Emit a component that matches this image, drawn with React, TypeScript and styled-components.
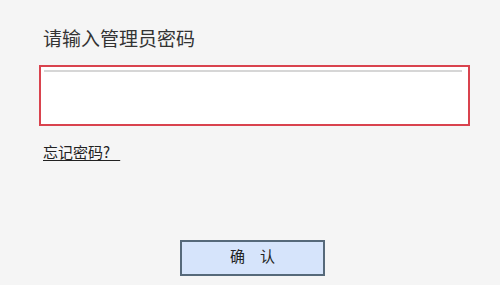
import React from "react";
import styled, { createGlobalStyle } from "styled-components";

const Global = createGlobalStyle`
  html, body { margin: 0; padding: 0; background: #f5f5f5; }
  body { font-family: "Noto Sans CJK SC", "Noto Sans", sans-serif; }
`;

const Page = styled.div`
  width: 500px;
  height: 285px;
  box-sizing: border-box;
  padding: 26px 0 0 39px;
  display: flex;
  flex-direction: column;
  background: #f5f5f5;
`;

const Title = styled.div`
  font-size: 19px;
  line-height: 24px;
  color: #333;
  margin: 0 0 15px 4px;
`;

const PasswordInput = styled.input`
  width: 431px;
  height: 61px;
  box-sizing: border-box;
  border: 2px solid #d9434e;
  background: #fff;
  outline: none;
  margin: 0;
  padding: 0 8px;
  font-size: 16px;
  box-shadow: inset 0 3px 0 #fff, inset 3px 0 0 #fff, inset -6px 0 0 #fff,
    inset 0 5px 0 #d6d6d6;
`;

const ForgetLink = styled.a`
  align-self: flex-start;
  margin: 16px 0 0 4px;
  font-size: 15px;
  line-height: 20px;
  color: #222;
  white-space: pre;
  text-decoration: underline;
  text-underline-offset: 2px;
  cursor: pointer;
`;

const ButtonRow = styled.div`
  display: flex;
  margin-top: 78px;
  padding-left: 141px;
`;

const ConfirmButton = styled.button`
  width: 145px;
  height: 36px;
  box-sizing: border-box;
  border: 2px solid #56697a;
  background: #d6e4fb;
  font-family: "Noto Sans CJK SC", sans-serif;
  font-size: 15px;
  line-height: 20px;
  color: #222;
  padding: 0 0 5px 0;
  cursor: pointer;
`;

export default function App() {
  return (
    <>
      <Global />
      <Page>
        <Title>请输入管理员密码</Title>
        <PasswordInput type="password" />
        <ForgetLink>{"忘记密码?   "}</ForgetLink>
        <ButtonRow>
          <ConfirmButton>确　认</ConfirmButton>
        </ButtonRow>
      </Page>
    </>
  );
}
